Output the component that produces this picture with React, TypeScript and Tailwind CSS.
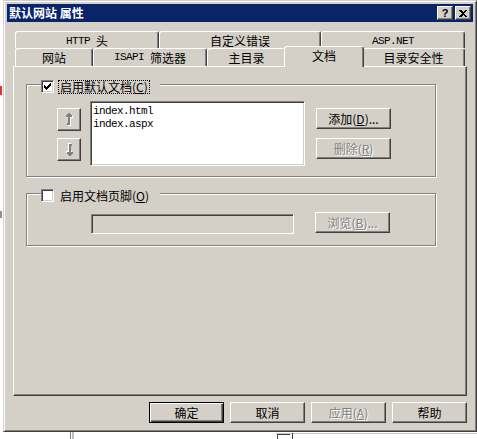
import React from "react";

const raised =
  "border border-t-white border-l-white border-r-[#404040] border-b-[#404040] shadow-[inset_-1px_-1px_0_#808080] bg-[#d4d0c8]";
const sunken =
  "border border-t-[#808080] border-l-[#808080] border-r-white border-b-white shadow-[inset_1px_1px_0_#404040,inset_-1px_-1px_0_#d4d0c8]";
const disabledText = "text-[#808080] [text-shadow:1px_1px_0_#fff]";
const mono = "font-['Liberation_Mono',monospace] text-[11px] tracking-[-0.6px]";

function Check({ checked }: { checked?: boolean }) {
  return (
    <div className={`relative h-[13px] w-[13px] shrink-0 bg-white ${sunken}`}>
      {checked && (
        <svg className="absolute left-[2px] top-[2px]" width="7" height="7" viewBox="0 0 7 7" shapeRendering="crispEdges">
          <rect x="6" y="0" width="1" height="1" fill="#000" />
          <rect x="5" y="1" width="2" height="1" fill="#000" />
          <rect x="0" y="2" width="1" height="1" fill="#000" />
          <rect x="4" y="2" width="3" height="1" fill="#000" />
          <rect x="0" y="3" width="2" height="1" fill="#000" />
          <rect x="3" y="3" width="3" height="1" fill="#000" />
          <rect x="0" y="4" width="5" height="1" fill="#000" />
          <rect x="1" y="5" width="3" height="1" fill="#000" />
          <rect x="2" y="6" width="1" height="1" fill="#000" />
        </svg>
      )}
    </div>
  );
}

function Arrow({ down }: { down?: boolean }) {
  const shape = (c: string, o: number) => (
    <g fill={c} transform={`translate(${o},${o})`}>
      <rect x="3" y="0" width="2" height="1" />
      <rect x="2" y="1" width="4" height="1" />
      <rect x="1" y="2" width="6" height="1" />
      <rect x="1" y="3" width="2" height="1" />
      <rect x="5" y="3" width="2" height="1" />
      <rect x="3" y="1" width="2" height="11" />
      <rect x="2" y="10" width="1" height="2" />
    </g>
  );
  return (
    <svg width="9" height="13" viewBox="0 0 9 13" shapeRendering="crispEdges" className={down ? "rotate-180" : ""}>
      {shape("#fff", 1)}
      {shape("#808080", 0)}
    </svg>
  );
}

function Tab({ cls, children, sel }: { cls: string; children: React.ReactNode; sel?: boolean }) {
  return (
    <div
      className={`flex shrink-0 items-center justify-center rounded-t-[3px] border-l border-r border-t border-l-white border-t-white border-r-[#404040] bg-[#d4d0c8] text-[12px] leading-none text-black shadow-[inset_-1px_0_0_#808080] ${
        sel ? "relative z-10 -mx-[2px] -mt-[2px] h-[21px] pb-[3px]" : "h-full"
      } ${cls}`}
    >
      {children}
    </div>
  );
}

export default function App() {
  return (
    <div className="relative h-[439px] w-[477px] overflow-hidden bg-white font-['Noto_Sans_CJK_SC',sans-serif]">
      {/* background bits from other windows */}
      <div className="absolute left-0 top-[86px] h-[9px] w-[2px] bg-[#e03030]" />
      <div className="absolute left-0 top-[211px] h-[7px] w-[2px] bg-[#909090]" />
      <div className="absolute left-[70px] top-[432px] h-[8px] w-[1px] bg-[#808080]" />
      <div className="absolute left-[72px] top-[432px] h-[8px] w-[2px] bg-[#c0c0c0]" />
      <div className="absolute left-[276px] top-[433px] h-[7px] w-[201px] border-t border-[#c8c8c8]" />
      <div className="absolute left-[277px] top-[434px] h-[6px] w-[13px] border-l border-t border-[#404040]" />
      <div className="absolute left-[292px] top-[433px] h-[7px] w-[1px] bg-[#404040]" />

      {/* window */}
      <div className="ml-[3px] h-[432px] w-[474px] border border-t-[#d4d0c8] border-l-[#d4d0c8] border-r-[#404040] border-b-[#404040] bg-[#d4d0c8] p-[3px] shadow-[inset_1px_1px_0_#fff,inset_-1px_-1px_0_#808080]">
        {/* caption */}
        <div className="flex h-[18px] items-center bg-[#0a246a] pl-[2px] pr-[2px]">
          <div className="flex-1 text-[12px] font-bold leading-none text-white">默认网站 属性</div>
          <div className={`flex h-[14px] w-[16px] items-center justify-center ${raised}`}>
            <span className="font-['Liberation_Sans',sans-serif] text-[11px] font-bold leading-none text-black">?</span>
          </div>
          <div className={`ml-[2px] flex h-[14px] w-[16px] items-center justify-center ${raised}`}>
            <svg width="8" height="7" viewBox="0 0 8 7" shapeRendering="crispEdges">
              <path d="M0 0h2l2 2l2-2h2l-3 3.5l3 3.5h-2l-2-2l-2 2h-2l3-3.5z" fill="#000" />
            </svg>
          </div>
        </div>

        {/* client */}
        <div className="px-[6px] pt-[9px]">
          {/* tab row 1 */}
          <div className="flex h-[17px] pl-[2px]">
            <Tab cls="w-[144px] pt-[2px]">
              <span className={mono}>HTTP&nbsp;</span>头
            </Tab>
            <Tab cls="w-[162px] pt-[2px]">自定义错误</Tab>
            <Tab cls="w-[144px] pt-[2px]">
              <span className={mono}>ASP.NET</span>
            </Tab>
          </div>
          {/* tab row 2 */}
          <div className="flex h-[18px] pl-[2px]">
            <Tab cls="w-[78px]">网站</Tab>
            <Tab cls="w-[114px]">
              <span className={mono}>ISAPI&nbsp;</span>筛选器
            </Tab>
            <Tab cls="w-[79px]">主目录</Tab>
            <Tab cls="w-[80px]" sel>
              文档
            </Tab>
            <Tab cls="w-[103px]">目录安全性</Tab>
          </div>

          {/* panel */}
          <div className="h-[330px] border border-t-white border-l-white border-r-[#404040] border-b-[#404040] text-[12px] leading-none text-black shadow-[inset_-1px_-1px_0_#808080]">
            {/* group 1 */}
            <div className="ml-[12px] mt-[17px] h-[93px] w-[410px] border border-[#808080] shadow-[inset_1px_1px_0_#fff,1px_1px_0_#fff]">
              <div className="-mt-[5px] ml-[14px] flex h-[13px] w-[119px] items-center bg-[#d4d0c8]">
                <Check checked />
                <div className="ml-[4px] flex h-[14px] items-center border border-dotted border-black px-[1px]">
                  启用默认文档(<u>C</u>)
                </div>
              </div>
              <div className="mt-[8px] flex items-start">
                <div className="ml-[30px] mt-[7px] flex flex-col gap-[7px]">
                  <div className={`flex h-[23px] w-[24px] items-center justify-center ${raised}`}>
                    <Arrow />
                  </div>
                  <div className={`flex h-[23px] w-[24px] items-center justify-center ${raised}`}>
                    <Arrow down />
                  </div>
                </div>
                <div className={`ml-[9px] h-[65px] w-[215px] bg-white px-[2px] pt-[3px] ${sunken}`}>
                  <div className={`h-[13px] leading-[13px] ${mono}`}>index.html</div>
                  <div className={`h-[13px] leading-[13px] ${mono}`}>index.aspx</div>
                </div>
                <div className="ml-[11px] mt-[7px] flex flex-col gap-[9px]">
                  <div className={`flex h-[21px] w-[75px] items-center justify-center ${raised}`}>
                    添加(<u>D</u>)...
                  </div>
                  <div className={`flex h-[21px] w-[75px] items-center justify-center ${raised} ${disabledText}`}>
                    删除(<u>R</u>)
                  </div>
                </div>
              </div>
            </div>

            {/* group 2 */}
            <div className="ml-[12px] mt-[16px] h-[53px] w-[410px] border border-[#808080] shadow-[inset_1px_1px_0_#fff,1px_1px_0_#fff]">
              <div className="-mt-[5px] ml-[14px] flex h-[13px] w-[119px] items-center bg-[#d4d0c8]">
                <Check />
                <div className="ml-[5px] flex h-[14px] items-center px-[1px]">
                  启用文档页脚(<u>O</u>)
                </div>
              </div>
              <div className="mt-[10px] flex items-start">
                <div className={`ml-[64px] mt-[2px] h-[20px] w-[203px] bg-[#d4d0c8] ${sunken}`} />
                <div className={`ml-[21px] flex h-[21px] w-[75px] items-center justify-center ${raised} ${disabledText}`}>
                  浏览(<u>B</u>)...
                </div>
              </div>
            </div>
          </div>

          {/* bottom buttons */}
          <div className="mt-[6px] flex justify-end gap-[6px] text-[12px] leading-none text-black">
            <div className="flex h-[21px] w-[75px] items-center justify-center border border-black bg-[#d4d0c8] shadow-[inset_1px_1px_0_#fff,inset_-1px_-1px_0_#404040,inset_-2px_-2px_0_#808080]">
              确定
            </div>
            <div className={`flex h-[21px] w-[75px] items-center justify-center ${raised}`}>取消</div>
            <div className={`flex h-[21px] w-[75px] items-center justify-center ${raised} ${disabledText}`}>
              应用(<u>A</u>)
            </div>
            <div className={`flex h-[21px] w-[75px] items-center justify-center ${raised}`}>帮助</div>
          </div>
        </div>
      </div>
    </div>
  );
}
